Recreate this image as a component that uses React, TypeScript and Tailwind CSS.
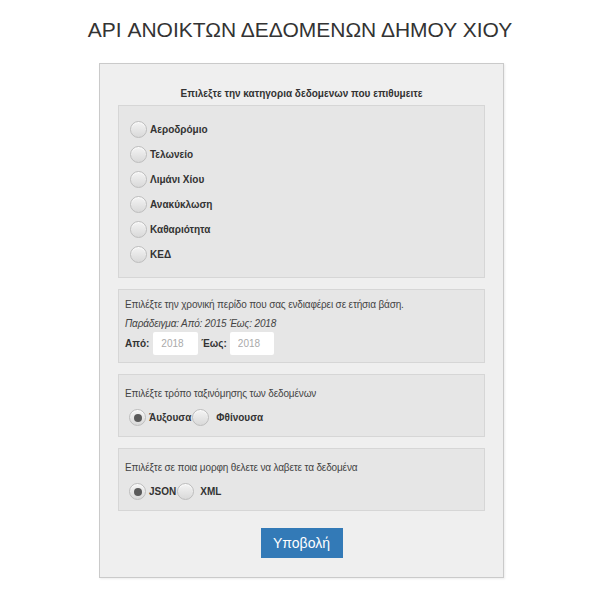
import React from "react";

function Radio({ checked = false }: { checked?: boolean }) {
  return (
    <span className="flex h-[17px] w-[17px] shrink-0 items-center justify-center rounded-full border border-[#bdbdbd] bg-gradient-to-b from-[#f4f4f4] to-[#d9d9d9] shadow-[inset_0_1px_1px_rgba(255,255,255,0.8)]">
      {checked && <span className="h-[8px] w-[8px] rounded-full bg-[#5a5a5a]" />}
    </span>
  );
}

const categories = ["Αεροδρόμιο", "Τελωνείο", "Λιμάνι Χίου", "Ανακύκλωση", "Καθαριότητα", "ΚΕΔ"];

export default function App() {
  return (
    <div className="min-h-[600px] w-[600px] bg-white font-['Liberation_Sans',Arial,sans-serif] text-[#333]">
      <h1 className="pt-[17px] text-center text-[21px] leading-[26px] text-[#333]">
        API ΑΝΟΙΚΤΩΝ ΔΕΔΟΜΕΝΩΝ ΔΗΜΟΥ ΧΙΟΥ
      </h1>
      <div className="ml-[99px] mt-[20px] h-[515px] w-[405px] border border-[#cacaca] bg-[#efefef] px-[18px] pt-[23px] shadow-[1px_1px_2px_rgba(0,0,0,0.08)]">
        <div className="text-center text-[10px] font-bold leading-[14px] text-[#333]">
          Επιλεξτε την κατηγορια δεδομενων που επιθυμειτε
        </div>
        <div className="mt-[4px] h-[173px] border border-[#d6d6d6] bg-[#e6e6e6] pl-[11px] pt-[15px]">
          <div className="flex flex-col gap-[8px]">
            {categories.map((c) => (
              <div key={c} className="flex h-[17px] items-center gap-[3px]">
                <Radio />
                <span className="text-[10px] font-bold text-[#333]">{c}</span>
              </div>
            ))}
          </div>
        </div>

        <div className="mt-[11px] h-[74px] border border-[#d6d6d6] bg-[#e6e6e6] pl-[6px] pt-[6px]">
          <div className="text-[10px] leading-[17px] tracking-[-0.15px] text-[#444]">
            Επιλέξτε την χρονική περίδο που σας ενδιαφέρει σε ετήσια βάση.
          </div>
          <div className="mt-[2px] text-[10px] italic leading-[17px] tracking-[-0.15px] text-[#444]">
            Παράδειγμα: Από: 2015 Έως: 2018
          </div>
          <div className="mt-0 flex items-center">
            <span className="text-[10px] font-bold text-[#333]">Από:</span>
            <input
              className="ml-[4px] h-[23px] w-[45px] rounded-[2px] border-0 bg-white pl-[8px] text-[10px] text-[#999] outline-none placeholder:text-[#aaa]"
              placeholder="2018"
            />
            <span className="ml-[3px] text-[10px] font-bold text-[#333]">Έως:</span>
            <input
              className="ml-[3px] h-[23px] w-[44px] rounded-[2px] border-0 bg-white pl-[8px] text-[10px] text-[#999] outline-none placeholder:text-[#aaa]"
              placeholder="2018"
            />
          </div>
        </div>

        <div className="mt-[11px] h-[63px] border border-[#d6d6d6] bg-[#e6e6e6] pl-[6px] pt-[10px]">
          <div className="text-[10px] leading-[17px] tracking-[-0.15px] text-[#444]">
            Επιλέξτε τρόπο ταξινόμησης των δεδομένων
          </div>
          <div className="mt-[7px] flex items-center pl-[4px]">
            <Radio checked />
            <span className="ml-[3px] text-[10px] font-bold text-[#333]">Άυξουσα</span>
            <span className="ml-[1px]"><Radio /></span>
            <span className="ml-[7px] text-[10px] font-bold text-[#333]">Φθίνουσα</span>
          </div>
        </div>

        <div className="mt-[11px] h-[63px] border border-[#d6d6d6] bg-[#e6e6e6] pl-[6px] pt-[10px]">
          <div className="text-[10px] leading-[17px] tracking-[-0.15px] text-[#444]">
            Επιλέξτε σε ποια μορφη θελετε να λαβετε τα δεδομένα
          </div>
          <div className="mt-[7px] flex items-center pl-[4px]">
            <Radio checked />
            <span className="ml-[3px] text-[10px] font-bold text-[#333]">JSON</span>
            <span className="ml-[1px]"><Radio /></span>
            <span className="ml-[6px] text-[10px] font-bold text-[#333]">XML</span>
          </div>
        </div>

        <div className="mt-[17px] flex justify-center">
          <button className="h-[30px] w-[82px] bg-[#337ab7] text-[14px] text-white">Υποβολή</button>
        </div>
      </div>
    </div>
  );
}
